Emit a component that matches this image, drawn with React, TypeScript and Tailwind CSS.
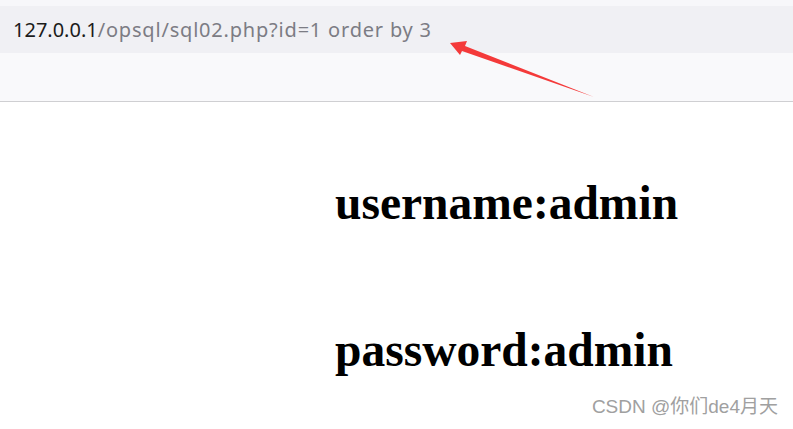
export default function App() {
  return (
    <div className="relative w-[793px] h-[429px] overflow-hidden bg-white">
      <div className="h-[6px] bg-[#f7f7fa]" />
      <div className="h-[47px] bg-[#f0f0f4] flex items-center pl-[13px] font-['Noto_Sans',sans-serif] text-[20px] leading-none">
        <span className="text-[#1b1b1b]">127.0.0.1</span>
        <span className="text-[#7c7c84] tracking-[0.8px]">/opsql/sql02.php?id=1 order by 3</span>
      </div>
      <div className="h-[49px] bg-[#f9f9fb] border-b border-[#cfcfd2]" />

      <div className="pl-[335px] pt-[73px] font-['Liberation_Serif',serif] font-bold text-black text-[47.5px] leading-[56px] flex flex-col gap-[91px]">
        <h1>username:admin</h1>
        <h1>password:admin</h1>
      </div>

      <div className="absolute right-[15px] bottom-[8px] font-['Liberation_Sans','Noto_Sans_CJK_SC',sans-serif] text-[19px] text-[#a0a0a0]">
        CSDN @你们de4月天
      </div>

      <svg className="absolute left-0 top-0" width="793" height="429" viewBox="0 0 793 429">
        <polygon points="450,43 467,41 465,46 594,97 462,51 460,55" fill="#f43a3a" />
      </svg>
    </div>
  );
}
